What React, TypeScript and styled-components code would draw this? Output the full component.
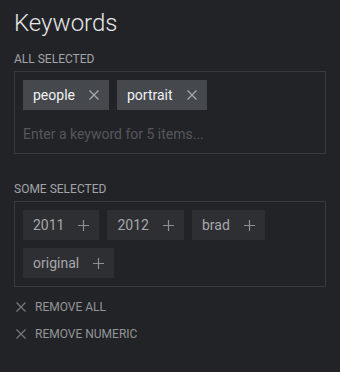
import React from "react";
import styled, { createGlobalStyle } from "styled-components";

const GlobalStyle = createGlobalStyle`
  html, body {
    margin: 0;
    padding: 0;
    background: #222327;
  }
  body {
    font-family: Roboto, "Liberation Sans", sans-serif;
  }
`;

const CloseIcon: React.FC<{ size?: number; color: string }> = ({ size = 10, color }) => (
  <svg width={size} height={size} viewBox="0 0 10 10">
    <path d="M0.5 0.5 L9.5 9.5 M9.5 0.5 L0.5 9.5" stroke={color} strokeWidth="1.2" fill="none" />
  </svg>
);

const PlusIcon: React.FC<{ color: string }> = ({ color }) => (
  <svg width={11} height={11} viewBox="0 0 11 11">
    <path d="M5.5 0 V11 M0 5.5 H11" stroke={color} strokeWidth="1.2" fill="none" />
  </svg>
);

const App: React.FC = () => {
  const allSelected = ["people", "portrait"];
  const someSelected = ["2011", "2012", "brad", "original"];

  return (
    <>
      <GlobalStyle />
      <Panel>
        <Title>Keywords</Title>
        <SectionLabel>All selected</SectionLabel>
        <TagBox>
          <TagList>
            {allSelected.map((k) => (
              <Tag key={k} active>
                {k}
                <CloseIcon color="#a9abae" />
              </Tag>
            ))}
          </TagList>
          <KeywordInput placeholder="Enter a keyword for 5 items..." />
        </TagBox>

        <SectionLabel spaced>Some selected</SectionLabel>
        <TagBox>
          <TagList>
            {someSelected.map((k) => (
              <Tag key={k}>
                {k}
                <PlusIcon color="#8d8f93" />
              </Tag>
            ))}
          </TagList>
        </TagBox>

        <Actions>
          <ActionLink>
            <CloseIcon color="#77797d" />
            Remove all
          </ActionLink>
          <ActionLink>
            <CloseIcon color="#77797d" />
            Remove numeric
          </ActionLink>
        </Actions>
      </Panel>
    </>
  );
};

export default App;

const Panel = styled.div`
  width: 340px;
  height: 372px;
  box-sizing: border-box;
  padding: 8px 14px 0 14px;
  background: #222327;
`;

const Title = styled.h1`
  margin: 0;
  font-size: 24px;
  font-weight: 300;
  line-height: 30px;
  color: #e6e6e7;
`;

const SectionLabel = styled.div<{ spaced?: boolean }>`
  margin-top: ${(p) => (p.spaced ? "28px" : "14px")};
  margin-bottom: 5px;
  font-size: 12px;
  line-height: 14px;
  text-transform: uppercase;
  color: #a3a4a7;
`;

const TagBox = styled.div`
  box-sizing: border-box;
  width: 312px;
  border: 1px solid #393a3e;
  padding: 8px;
`;

const TagList = styled.div`
  display: flex;
  flex-wrap: wrap;
  gap: 8px;
`;

const Tag = styled.span<{ active?: boolean }>`
  display: inline-flex;
  align-items: center;
  gap: 14px;
  height: 30px;
  padding: 0 10px;
  font-size: 14px;
  background: ${(p) => (p.active ? "#45484d" : "#2d2f33")};
  color: ${(p) => (p.active ? "#f2f2f2" : "#a6a7aa")};
`;

const KeywordInput = styled.input`
  display: block;
  width: 100%;
  box-sizing: border-box;
  margin-top: 13px;
  padding: 0;
  height: 22px;
  border: none;
  outline: none;
  background: transparent;
  font-family: Roboto, "Liberation Sans", sans-serif;
  font-size: 14px;
  color: #e6e6e7;

  &::placeholder {
    color: #55575b;
  }
`;

const Actions = styled.div`
  display: flex;
  flex-direction: column;
  gap: 13px;
  margin-top: 13px;
  padding-left: 2px;
`;

const ActionLink = styled.div`
  display: flex;
  align-items: center;
  gap: 9px;
  font-size: 12px;
  line-height: 14px;
  text-transform: uppercase;
  color: #949599;
  cursor: pointer;
`;
